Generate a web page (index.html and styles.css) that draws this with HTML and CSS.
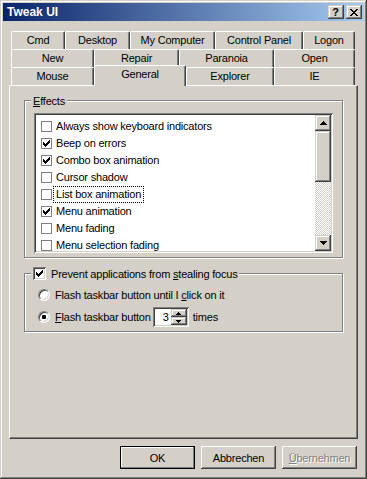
FILE: index.html
```html
<!DOCTYPE html>
<html lang="de">
<head>
<meta charset="UTF-8">
<title>Tweak UI</title>
<link rel="stylesheet" href="styles.css">
</head>

<body>

<div class="window">

<div class="titlebar">
    <span class="title">Tweak UI</span>
    <span class="caption-btn help">?</span>
    <span class="caption-btn close">
        <svg width="8" height="7" viewBox="0 0 8 7"><path d="M0 0h2v1H0zM6 0h2v1H6zM1 1h2v1H1zM5 1h2v1H5zM2 2h4v1H2zM3 3h2v1H3zM2 4h4v1H2zM1 5h2v1H1zM5 5h2v1H5zM0 6h2v1H0zM6 6h2v1H6z"/></svg>
    </span>
</div>

<div class="client">

<div class="tabs">
    <div class="tab-row row-1">
        <div class="tab">Cmd</div>
        <div class="tab">Desktop</div>
        <div class="tab">My Computer</div>
        <div class="tab">Control Panel</div>
        <div class="tab">Logon</div>
    </div>
    <div class="tab-row row-2">
        <div class="tab">New</div>
        <div class="tab">Repair</div>
        <div class="tab">Paranoia</div>
        <div class="tab">Open</div>
    </div>
    <div class="tab-row row-3">
        <div class="tab">Mouse</div>
        <div class="tab active">General</div>
        <div class="tab">Explorer</div>
        <div class="tab">IE</div>
    </div>
</div>

<div class="page">

    <div class="group effects">
        <div class="group-title"><u>E</u>ffects</div>
        <div class="listbox">
            <div class="items">
                <div class="item"><span class="check"></span><span class="item-label">Always show keyboard indicators</span></div>
                <div class="item"><span class="check"><svg class="tick" viewBox="0 0 7 7"><path d="M0 2h1v3H0zM1 3h1v3H1zM2 4h1v3H2zM3 3h1v3H3zM4 2h1v3H4zM5 1h1v3H5zM6 0h1v3H6z"/></svg></span><span class="item-label">Beep on errors</span></div>
                <div class="item"><span class="check"><svg class="tick" viewBox="0 0 7 7"><path d="M0 2h1v3H0zM1 3h1v3H1zM2 4h1v3H2zM3 3h1v3H3zM4 2h1v3H4zM5 1h1v3H5zM6 0h1v3H6z"/></svg></span><span class="item-label">Combo box animation</span></div>
                <div class="item"><span class="check"></span><span class="item-label">Cursor shadow</span></div>
                <div class="item"><span class="check"></span><span class="item-label focused">List box animation</span></div>
                <div class="item"><span class="check"><svg class="tick" viewBox="0 0 7 7"><path d="M0 2h1v3H0zM1 3h1v3H1zM2 4h1v3H2zM3 3h1v3H3zM4 2h1v3H4zM5 1h1v3H5zM6 0h1v3H6z"/></svg></span><span class="item-label">Menu animation</span></div>
                <div class="item"><span class="check"></span><span class="item-label">Menu fading</span></div>
                <div class="item"><span class="check"></span><span class="item-label">Menu selection fading</span></div>
            </div>
            <div class="scrollbar">
                <div class="sb-btn"><svg width="7" height="4" viewBox="0 0 7 4"><path d="M3 0h1v1H3zM2 1h3v1H2zM1 2h5v1H1zM0 3h7v1H0z"/></svg></div>
                <div class="sb-thumb"></div>
                <div class="sb-track"></div>
                <div class="sb-btn"><svg width="7" height="4" viewBox="0 0 7 4"><path d="M0 0h7v1H0zM1 1h5v1H1zM2 2h3v1H2zM3 3h1v1H3z"/></svg></div>
            </div>
        </div>
    </div>

    <div class="group focus-group">
        <div class="group-title">
            <span class="checkbox"><svg class="tick" viewBox="0 0 7 7"><path d="M0 2h1v3H0zM1 3h1v3H1zM2 4h1v3H2zM3 3h1v3H3zM4 2h1v3H4zM5 1h1v3H5zM6 0h1v3H6z"/></svg></span>
            <span class="title-text">Prevent applications from <u>s</u>tealing focus</span>
        </div>
        <div class="option">
            <span class="radio"></span>
            <span class="option-text">Flash taskbar button until I <u>c</u>lick on it</span>
        </div>
        <div class="option option-spin">
            <span class="radio on"></span>
            <span class="option-text"><u>F</u>lash taskbar button</span>
            <span class="spin">
                <span class="spin-value">3</span>
                <span class="updown">
                    <span class="ud-btn"><svg width="5" height="3" viewBox="0 0 5 3"><path d="M2 0h1v1H2zM1 1h3v1H1zM0 2h5v1H0z"/></svg></span>
                    <span class="ud-btn"><svg width="5" height="3" viewBox="0 0 5 3"><path d="M0 0h5v1H0zM1 1h3v1H1zM2 2h1v1H2z"/></svg></span>
                </span>
            </span>
            <span class="times">times</span>
        </div>
    </div>

</div>

<div class="buttons">
    <button class="button default">OK</button>
    <button class="button">Abbrechen</button>
    <button class="button disabled"><u>Ü</u>bernehmen</button>
</div>

</div>
</div>

</body>
</html>
```

FILE: styles.css
```css
* {
    box-sizing: border-box;
}

body {
    margin: 0;
    font-family: "Liberation Sans", Arial, sans-serif;
    font-size: 11px;
    letter-spacing: -0.2px;
    color: #000;
    background: #d4d0c8;
}

svg {
    display: block;
    shape-rendering: crispEdges;
}

.window {
    width: 367px;
    height: 479px;
    padding: 3px;
    background: #d4d0c8;
    box-shadow: inset -1px -1px #404040, inset 1px 1px #d4d0c8, inset -2px -2px #808080, inset 2px 2px #fff;
    display: flex;
    flex-direction: column;
}

/* title bar */

.titlebar {
    height: 18px;
    background: linear-gradient(to right, #0a246a, #a6caf0);
    display: flex;
    align-items: center;
    padding: 0 2px;
    color: #fff;
}

.title {
    flex: 1;
    padding-left: 2px;
    font-weight: bold;
    font-size: 12px;
    letter-spacing: 0;
}

.caption-btn {
    width: 16px;
    height: 14px;
    background: #d4d0c8;
    box-shadow: inset -1px -1px #404040, inset 1px 1px #d4d0c8, inset -2px -2px #808080, inset 2px 2px #fff;
    display: flex;
    align-items: center;
    justify-content: center;
    color: #000;
}

.help {
    font-weight: bold;
    font-size: 11px;
    letter-spacing: 0;
    line-height: 12px;
    padding-right: 1px;
}

.close {
    margin-left: 2px;
}

/* tabs */

.client {
    flex: 1;
    padding: 10px 6px 0 6px;
}

.tabs {
    margin-left: 2px;
    width: 344px;
}

.tab-row {
    display: grid;
    height: 18px;
    align-items: start;
}

.row-1 {
    grid-template-columns: 54px 65px 85px 88px 52px;
}

.row-2 {
    grid-template-columns: 83px 85px 95px 81px;
}

.row-3 {
    grid-template-columns: 83px 92px 88px 81px;
}

.tab {
    height: 18px;
    border: 1px solid #fff;
    border-bottom: 0;
    border-right-color: #404040;
    border-radius: 2px 2px 0 0;
    box-shadow: inset -1px 0 #808080;
    background: #d4d0c8;
    text-align: center;
    line-height: 16px;
    white-space: nowrap;
}

.tab.active {
    height: 21px;
    margin-top: -2px;
    line-height: 17px;
    position: relative;
    z-index: 1;
}

.page {
    height: 354px;
    border: 1px solid;
    border-color: #fff #404040 #404040 #fff;
    box-shadow: inset -1px -1px #808080;
    padding: 14px 14px 0 14px;
}

/* group boxes */

.group {
    border: 1px solid #808080;
    box-shadow: inset 1px 1px #fff, 1px 1px #fff;
    padding-bottom: 4px;
}

.group-title {
    display: flex;
    align-items: center;
    width: fit-content;
    height: 13px;
    margin: -7px 0 0 6px;
    padding: 0 2px;
    background: #d4d0c8;
    white-space: nowrap;
}

.focus-group {
    margin-top: 15px;
}

/* list box */

.listbox {
    display: flex;
    height: 140px;
    margin: 6px 9px 0 9px;
    padding: 2px;
    background: #fff;
    box-shadow: inset 1px 1px #808080, inset -1px -1px #fff, inset 2px 2px #404040, inset -2px -2px #d4d0c8;
}

.items {
    flex: 1;
    overflow: hidden;
    padding-top: 3px;
}

.item {
    display: flex;
    align-items: center;
    height: 17px;
    padding-left: 5px;
    white-space: nowrap;
}

.check {
    flex: none;
    width: 11px;
    height: 11px;
    border: 1px solid #808080;
    background: #fff;
    display: flex;
    align-items: center;
    justify-content: center;
}

.tick {
    width: 7px;
    height: 7px;
}

.item-label {
    margin-left: 1px;
    padding: 0 3px;
    line-height: 17px;
}

.focused {
    outline: 1px dotted #000;
    outline-offset: -1px;
}

.scrollbar {
    width: 16px;
    display: flex;
    flex-direction: column;
}

.sb-btn,
.sb-thumb,
.ud-btn {
    background: #d4d0c8;
    box-shadow: inset -1px -1px #404040, inset 1px 1px #d4d0c8, inset -2px -2px #808080, inset 2px 2px #fff;
}

.sb-btn {
    height: 16px;
    display: flex;
    align-items: center;
    justify-content: center;
}

.sb-thumb {
    height: 51px;
}

.sb-track {
    flex: 1;
    background: repeating-conic-gradient(#fff 0 25%, #d4d0c8 0 50%) 0 0 / 2px 2px;
}

/* focus group */

.checkbox {
    flex: none;
    width: 13px;
    height: 13px;
    background: #fff;
    box-shadow: inset 1px 1px #808080, inset -1px -1px #fff, inset 2px 2px #404040, inset -2px -2px #d4d0c8;
    display: flex;
    align-items: center;
    justify-content: center;
}

.title-text {
    margin-left: 5px;
}

.option {
    display: flex;
    align-items: center;
    height: 16px;
    margin: 7px 0 0 13px;
    white-space: nowrap;
}

.option-spin {
    height: 20px;
    margin-top: 4px;
}

.radio {
    flex: none;
    width: 12px;
    height: 12px;
    border-radius: 50%;
    border: 1px solid;
    border-color: #808080 #fff #fff #808080;
    background: #fff;
    box-shadow: inset 1px 1px #404040, inset -1px -1px #d4d0c8;
    display: flex;
    align-items: center;
    justify-content: center;
}

.radio.on::after {
    content: "";
    width: 4px;
    height: 4px;
    border-radius: 1px;
    background: #000;
}

.option-text {
    margin-left: 5px;
}

.spin {
    display: flex;
    width: 36px;
    height: 20px;
    margin-left: 2px;
    padding: 2px;
    background: #fff;
    box-shadow: inset 1px 1px #808080, inset -1px -1px #fff, inset 2px 2px #404040, inset -2px -2px #d4d0c8;
}

.spin-value {
    flex: 1;
    text-align: right;
    padding-right: 2px;
    line-height: 16px;
}

.updown {
    width: 16px;
    display: flex;
    flex-direction: column;
}

.ud-btn {
    flex: 1;
    display: flex;
    align-items: center;
    justify-content: center;
}

.times {
    margin-left: 4px;
}

/* dialog buttons */

.buttons {
    display: flex;
    justify-content: flex-end;
    gap: 6px;
    margin-top: 7px;
    padding-right: 1px;
}

.button {
    width: 75px;
    height: 23px;
    padding: 0;
    border: 0;
    font: inherit;
    letter-spacing: inherit;
    color: #000;
    background: #d4d0c8;
    box-shadow: inset -1px -1px #404040, inset 1px 1px #fff, inset -2px -2px #808080, inset 2px 2px #d4d0c8;
}

.button.default {
    border: 1px solid #000;
    box-shadow: inset -1px -1px #808080, inset 1px 1px #fff;
}

.button.disabled {
    color: #808080;
    text-shadow: 1px 1px #fff;
}
```
